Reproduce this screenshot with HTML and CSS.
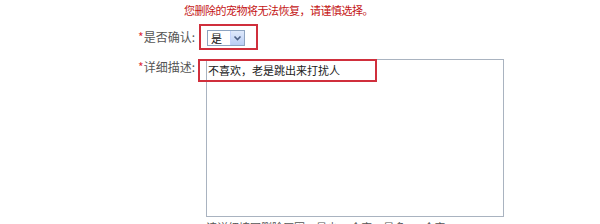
FILE: index.html
```html
<!doctype html>
<html>
	<head>
		<meta charset="utf-8">
		<link rel="stylesheet" href="styles.css">
	</head>
	<body>
		<p class="tip">您删除的宠物将无法恢复，请谨慎选择。</p>
		<form class="del-form">
			<div class="row row-confirm">
				<label class="lbl"><span class="req">*</span>是否确认:</label>
				<span class="mark-select">
					<span class="fake-select">
						<span class="sel-text">是</span>
						<span class="sel-btn">
							<svg width="11" height="10" viewBox="0 0 11 10"><path d="M2.5 3.5 L5.5 6.5 L8.5 3.5" fill="none" stroke="#4d6185" stroke-width="1.6"/></svg>
						</span>
					</span>
				</span>
			</div>
			<div class="row row-desc">
				<label class="lbl"><span class="req">*</span>详细描述:</label>
				<div class="area-wrap">
					<textarea class="desc">不喜欢，老是跳出来打扰人</textarea>
					<span class="mark-text"></span>
				</div>
			</div>
			<p class="hint">请详细填写删除原因，最少10个字，最多200个字。</p>
		</form>
	</body>
</html>
```

FILE: styles.css
```css
body {
	margin: 0;
	background: #fff;
	font-family: "Noto Sans CJK SC", "Noto Sans", sans-serif;
	font-size: 12px;
	color: #555;
}

.tip {
	margin: 0;
	padding: 2px 0 0 184px;
	height: 24px;
	box-sizing: border-box;
	color: #c41414;
	font-size: 11px;
	line-height: 16px;
	letter-spacing: -0.5px;
}

.del-form {
	margin: 0;
}

.row {
	display: flex;
}

.row-confirm {
	align-items: center;
}

.lbl {
	width: 199px;
	box-sizing: border-box;
	padding-right: 4px;
	text-align: right;
	line-height: 14px;
}

.req {
	color: #e0303a;
}

.mark-select {
	display: inline-block;
	border: 2px solid #d02f3c;
	padding: 4px 11px 2px 6px;
}

.fake-select {
	display: flex;
	align-items: center;
	width: 38px;
	height: 16px;
	box-sizing: border-box;
	border: 1px solid #8ea4c1;
	background: #fff;
}

.sel-text {
	flex: 1;
	padding-left: 3px;
	font-size: 11px;
	line-height: 14px;
	color: #111;
}

.sel-btn {
	display: flex;
	align-items: center;
	justify-content: center;
	width: 13px;
	height: 14px;
	background: linear-gradient(#dfe9fb, #b9cdf5);
	border-left: 1px solid #c3d3fb;
}

.row-desc {
	margin-top: 9px;
	align-items: flex-start;
}

.row-desc .lbl {
	padding-top: 1px;
}

.area-wrap {
	position: relative;
	margin-left: 7px;
}

.desc {
	display: block;
	width: 298px;
	height: 158px;
	box-sizing: border-box;
	margin: 0;
	padding: 2px 1px;
	border: 1px solid #a9b3c0;
	resize: none;
	font-family: inherit;
	font-size: 11px;
	line-height: 16px;
	color: #222;
	outline: none;
}

.mark-text {
	position: absolute;
	left: -8px;
	top: 0;
	width: 179px;
	height: 23px;
	box-sizing: border-box;
	border: 2px solid #d02f3c;
}

.hint {
	margin: 3px 0 0 206px;
	color: #555;
	font-size: 11px;
	line-height: 14px;
}
```
